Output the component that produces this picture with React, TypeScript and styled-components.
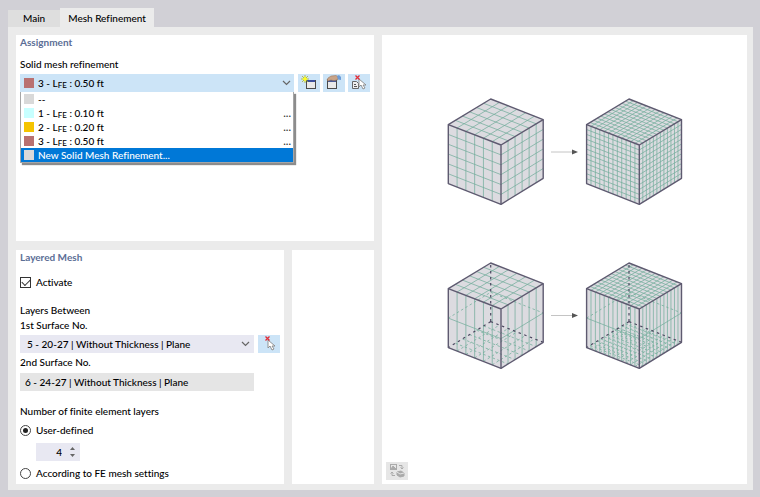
import React, { useState } from "react";
import styled, { createGlobalStyle } from "styled-components";

const GlobalStyle = createGlobalStyle`
  * { box-sizing: border-box; }
  body { margin: 0; background: #d1d0d6; }
  body, button, input, select {
    font-family: Lato, "Open Sans", sans-serif;
    font-size: 10px;
    font-weight: 500;
    line-height: 15px;
    font-variant-ligatures: none;
    color: #000;
  }
`;

const Page = styled.div`
  display: flex;
  flex-direction: column;
  min-height: 100vh;
  padding: 8px 7px 7px 8px;
`;

const Tabs = styled.div`
  display: flex;
  align-items: flex-end;
`;

const Tab = styled.button<{ $active?: boolean }>`
  height: ${(p) => (p.$active ? 19 : 17)}px;
  padding: ${(p) => (p.$active ? "2px 8px 0" : "0 15px")};
  border: 0;
  background: ${(p) => (p.$active ? "#ebebeb" : "#dedede")};
`;

const Body = styled.main`
  flex: 1;
  display: grid;
  grid-template-columns: 268fr 82fr 365fr;
  grid-template-rows: 206px 1fr;
  gap: 9px 8px;
  padding: 8px 6px 6px 8px;
  background: #ebebeb;
`;

const Panel = styled.section`
  min-width: 0;
  padding: 0 4px 2px;
  background: #fff;
`;

const AssignmentPanel = styled(Panel)`
  grid-column: 1 / 3;
`;

const PreviewPanel = styled(Panel)`
  grid-column: 3;
  grid-row: 1 / 3;
  display: flex;
  flex-direction: column;
  justify-content: space-between;
  align-items: flex-start;
  padding: 55px 4px 4px;
`;

const Title = styled.h2`
  margin: 0;
  font-size: 10px;
  line-height: 15px;
  font-weight: 700;
  color: #5b6e96;
`;

const Label = styled.label<{ $gap?: number }>`
  display: block;
  margin-top: ${(p) => p.$gap ?? 0}px;
`;

const GroupLabel = styled.div<{ $gap?: number }>`
  margin-top: ${(p) => p.$gap ?? 0}px;
`;

const ControlRow = styled.div`
  display: grid;
  grid-template-columns: 1fr auto;
  gap: 4px;
  margin-top: 2px;
`;

const ButtonGroup = styled.div`
  display: flex;
  gap: 3px;
`;

const IconButton = styled.button<{ $muted?: boolean }>`
  display: flex;
  align-items: center;
  justify-content: center;
  width: 22px;
  height: 18px;
  padding: 0;
  border: 0;
  background: ${(p) => (p.$muted ? "#e6e6e6" : "#cce4f7")};
`;

const Combo = styled.div`
  position: relative;
`;

const ComboButton = styled.button`
  display: flex;
  align-items: center;
  width: 100%;
  height: 18px;
  padding: 0 3px 0 4px;
  border: 0;
  background: #cce4f7;
`;

const ComboText = styled.span`
  flex: 1;
  text-align: left;
`;

const List = styled.ul`
  position: absolute;
  top: 100%;
  left: 0;
  right: 0;
  margin: 0;
  padding: 0;
  list-style: none;
  background: #fff;
  border: 1px solid #a6a6a6;
  border-top: 0;
  box-shadow: 2px 2px 1px #8c8c8c;
`;

const Option = styled.li<{ $selected?: boolean }>`
  display: flex;
  align-items: center;
  height: 14px;
  padding: 0 2px 0 3px;
  background: ${(p) => (p.$selected ? "#0078d7" : "#fff")};
  color: ${(p) => (p.$selected ? "#fff" : "#000")};
`;

const Swatch = styled.span<{ $color: string }>`
  width: 10px;
  height: 10px;
  margin-right: 4px;
  background: ${(p) => p.$color};
`;

const Small = styled.span`
  font-size: 8px;
  line-height: 8px;
  vertical-align: -1px;
`;

const More = styled.span`
  margin-left: auto;
  font-size: 11px;
  line-height: 14px;
  color: #333;
`;

const SelectWrap = styled.div`
  display: grid;
  align-items: center;
  background: #e8e8f2;
  > * { grid-area: 1 / 1; }
  > svg { justify-self: end; margin-right: 4px; pointer-events: none; }
`;

const Select = styled.select`
  appearance: none;
  width: 100%;
  height: 18px;
  padding: 0 16px 0 7px;
  border: 0;
  border-radius: 0;
  background: transparent;
`;

const ReadOnly = styled.input`
  display: block;
  width: calc(100% - 26px);
  height: 18px;
  margin-top: 3px;
  padding: 0 5px;
  border: 0;
  background: #e5e5e5;
`;

const Choice = styled.label<{ $gap: number }>`
  display: flex;
  align-items: center;
  gap: 5px;
  height: 18px;
  margin-top: ${(p) => p.$gap}px;
`;

const Check = styled.input`
  appearance: none;
  width: 11px;
  height: 11px;
  margin: 0;
  border: 1px solid #333;
  background: #fff;
  display: grid;
  place-items: center;
  &:checked::before {
    content: "";
    width: 7px;
    height: 4px;
    margin-top: -2px;
    border: solid #333;
    border-width: 0 0 1px 1px;
    transform: rotate(-45deg);
  }
`;

const Radio = styled.input`
  appearance: none;
  width: 11px;
  height: 11px;
  margin: 0;
  border: 1px solid #444;
  border-radius: 50%;
  background: #fff;
  display: grid;
  place-items: center;
  &:checked::before {
    content: "";
    width: 5px;
    height: 5px;
    border-radius: 50%;
    background: #222;
  }
`;

const Spinner = styled.div`
  display: flex;
  align-items: center;
  width: 44px;
  height: 18px;
  margin: 4px 0 0 16px;
  padding-right: 5px;
  background: #e8e8f2;
`;

const SpinInput = styled.input`
  flex: 1;
  min-width: 0;
  height: 18px;
  padding: 0 8px 0 0;
  border: 0;
  background: transparent;
  text-align: right;
`;

const SpinButtons = styled.div`
  display: flex;
  flex-direction: column;
`;

const SpinButton = styled.button`
  display: flex;
  align-items: center;
  justify-content: center;
  width: 5px;
  height: 7px;
  padding: 0;
  border: 0;
  background: none;
`;

const Illustration = styled.svg`
  display: block;
  align-self: center;
  width: 261px;
  max-width: 100%;
`;

const Chevron = () => (
  <svg width="9" height="6" viewBox="0 0 9 6" fill="none" stroke="#666" strokeWidth="1.2" aria-hidden="true">
    <path d="M1 1l3.5 3.5L8 1" />
  </svg>
);

const NewIcon = () => (
  <svg width="16" height="16" viewBox="0 0 16 16" aria-hidden="true">
    <rect x="5.5" y="5.5" width="9" height="8" fill="#e9e9e9" stroke="#4a4a4a" />
    <path d="M6 5h8v2H6z" fill="#3c4f9c" />
    <path d="M4 0v8M0 4h8M1 1l6 6M7 1L1 7" stroke="#a9b02a" strokeWidth="0.8" />
    <path d="M4 1l1 2 2 1-2 1-1 2-1-2-2-1 2-1z" fill="#ffff20" />
  </svg>
);

const EditIcon = () => (
  <svg width="16" height="16" viewBox="0 0 16 16" aria-hidden="true">
    <rect x="1.5" y="4.5" width="9" height="9" fill="#e9e9e9" stroke="#4a4a4a" />
    <path d="M2 5h8v2H2z" fill="#4a5a96" />
    <path d="M2 3l3-2 5-.5 2 1v3l-3 1H7L5 5 2 6 1 5z" fill="#c9a488" stroke="#8b6b55" strokeWidth="0.5" />
    <path d="M11 1l2-1 2 2v3l-3-.5z" fill="#6d9dd8" />
  </svg>
);

const CursorShape = ({ x, y }: { x: number; y: number }) => (
  <g transform={`translate(${x} ${y})`}>
    <path d="M0 0v8l2-2 2 4 2-1-2-3h3z" fill="#fff" stroke="#888" strokeWidth="0.9" />
  </g>
);

const PickIcon = ({ withPage }: { withPage?: boolean }) => (
  <svg width="16" height="16" viewBox="0 0 16 16" aria-hidden="true">
    {withPage && (
      <>
        <path d="M1.5 6.5h4l2 2v5h-6z" fill="#eee" stroke="#666" />
        <path d="M3 9.5h2M3 11.5h3" stroke="#555" />
      </>
    )}
    <CursorShape x={withPage ? 8 : 7} y={4} />
    <path d="M4.5 0.5l4 4M8.5 0.5l-4 4" stroke="#e02c36" strokeWidth="1.3" />
  </svg>
);

const SwapIcon = () => (
  <svg width="16" height="16" viewBox="0 0 16 16" fill="none" stroke="#aaa" aria-hidden="true">
    <rect x="1.5" y="1.5" width="6" height="5" />
    <path d="M2 6l2-3 3 3z" fill="#aaa" />
    <path d="M10 2.5h3v3M11.5 4.5L13 6l1.5-1.5M6 12.500H3v-3M1.5 10.5L3 9l1.5 1.5" />
    <path d="M8 9l4-1 3 2v3l-4 1-3-2z" fill="#aaa" />
    <path d="M8 9l3 2 4-1" stroke="#e6e6e6" />
  </svg>
);

const SpinArrow = ({ down }: { down?: boolean }) => (
  <svg width="5" height="3" viewBox="0 0 5 3" fill="#666" aria-hidden="true">
    <path d={down ? "M0 0h5L2.5 3z" : "M0 3h5L2.5 0z"} />
  </svg>
);

type Point = [number, number];

const corners: Record<string, Point> = {
  backTop: [50.7, 8.7],
  leftTop: [8.3, 34.3],
  rightTop: [103.2, 29.3],
  frontTop: [61, 54.7],
  backBottom: [50.7, 67.3],
  leftBottom: [8.3, 93.3],
  rightBottom: [103.2, 88],
  frontBottom: [61, 114],
};

const mix = (a: Point, b: Point, t: number): Point => [
  a[0] + (b[0] - a[0]) * t,
  a[1] + (b[1] - a[1]) * t,
];

const seg = (a: Point, b: Point) =>
  `M${a[0].toFixed(2)} ${a[1].toFixed(2)}L${b[0].toFixed(2)} ${b[1].toFixed(2)}`;

/* Lines running from edge a-b to edge c-d, dividing the face in n strips. */
const strips = (a: Point, b: Point, c: Point, d: Point, n: number) =>
  Array.from({ length: n - 1 }, (_, i) =>
    seg(mix(a, b, (i + 1) / n), mix(c, d, (i + 1) / n))
  ).join("");

const Cube = ({ x, y, n, layered }: { x: number; y: number; n: number; layered?: boolean }) => {
  const c = corners;
  const rows = layered ? 2 : n;
  const top =
    strips(c.leftTop, c.backTop, c.frontTop, c.rightTop, n) +
    strips(c.leftTop, c.frontTop, c.backTop, c.rightTop, n);
  const columns =
    strips(c.leftTop, c.frontTop, c.leftBottom, c.frontBottom, n) +
    strips(c.frontTop, c.rightTop, c.frontBottom, c.rightBottom, n);
  const levels =
    strips(c.leftTop, c.leftBottom, c.frontTop, c.frontBottom, rows) +
    strips(c.frontTop, c.frontBottom, c.rightTop, c.rightBottom, rows);
  const floor =
    strips(c.leftBottom, c.backBottom, c.frontBottom, c.rightBottom, n) +
    strips(c.leftBottom, c.frontBottom, c.backBottom, c.rightBottom, n);
  const hiddenLevel =
    strips(c.leftTop, c.leftBottom, c.backTop, c.backBottom, 2) +
    strips(c.backTop, c.backBottom, c.rightTop, c.rightBottom, 2);
  const outline = [c.backTop, c.rightTop, c.rightBottom, c.frontBottom, c.leftBottom, c.leftTop];
  return (
    <g transform={`translate(${x} ${y})`} fill="none" strokeLinejoin="round">
      <polygon points={outline.join(" ")} fill="#dcdbe0" />
      <path d={top + columns + levels} stroke="#74ae9c" strokeWidth="0.75" />
      {layered && (
        <>
          <path d={floor + hiddenLevel} stroke="#74ae9c" strokeWidth="0.8" strokeDasharray="2.5 2.5" />
          <path
            d={
              seg(c.backBottom, c.backTop) +
              seg(c.backBottom, c.leftBottom) +
              seg(c.backBottom, c.rightBottom)
            }
            stroke="#4c4860"
            strokeWidth="1.2"
            strokeDasharray="2.5 3.5"
          />
        </>
      )}
      <polygon points={outline.join(" ")} stroke="#5e5a70" strokeWidth="1.4" />
      <path
        d={
          seg(c.leftTop, c.frontTop) +
          seg(c.frontTop, c.rightTop) +
          seg(c.frontTop, c.frontBottom)
        }
        stroke="#5e5a70"
        strokeWidth="1.4"
      />
    </g>
  );
};

const Arrow = ({ y }: { y: number }) => (
  <g transform={`translate(117 ${y})`}>
    <path d="M0 0h22" stroke="#c4c4c4" strokeWidth="1" />
    <path d="M21 -2.5L27 0l-6 2.5z" fill="#555" />
  </g>
);

const Length = ({ no, value }: { no: number; value: string }) => (
  <span>
    {no} - L<Small>FE</Small> : {value} ft
  </span>
);

const refinements = [
  { no: 1, value: "0.10", color: "#c8ffff" },
  { no: 2, value: "0.20", color: "#f5c400" },
  { no: 3, value: "0.50", color: "#b97171" },
];

export default function App() {
  const [active, setActive] = useState(true);
  const [mode, setMode] = useState("user");
  const [layers, setLayers] = useState(4);
  return (
    <>
      <GlobalStyle />
      <Page>
        <Tabs role="tablist">
          <Tab role="tab" aria-selected={false}>Main</Tab>
          <Tab role="tab" aria-selected $active>Mesh Refinement</Tab>
        </Tabs>
        <Body>
          <AssignmentPanel>
            <Title>Assignment</Title>
            <Label htmlFor="refinement" $gap={7}>Solid mesh refinement</Label>
            <ControlRow>
              <Combo>
                <ComboButton
                  id="refinement"
                  role="combobox"
                  aria-haspopup="listbox"
                  aria-expanded
                  aria-controls="refinement-list"
                >
                  <Swatch $color="#b97171" />
                  <ComboText><Length no={3} value="0.50" /></ComboText>
                  <Chevron />
                </ComboButton>
                <List id="refinement-list" role="listbox">
                  <Option role="option" aria-selected={false}>
                    <Swatch $color="#d9d9d9" />--
                  </Option>
                  {refinements.map((r) => (
                    <Option key={r.no} role="option" aria-selected={false}>
                      <Swatch $color={r.color} />
                      <Length no={r.no} value={r.value} />
                      <More>...</More>
                    </Option>
                  ))}
                  <Option role="option" aria-selected $selected>
                    <Swatch $color="#d9d9d9" />New Solid Mesh Refinement...
                  </Option>
                </List>
              </Combo>
              <ButtonGroup>
                <IconButton aria-label="New"><NewIcon /></IconButton>
                <IconButton aria-label="Edit"><EditIcon /></IconButton>
                <IconButton aria-label="Select objects"><PickIcon withPage /></IconButton>
              </ButtonGroup>
            </ControlRow>
          </AssignmentPanel>

          <Panel>
            <Title>Layered Mesh</Title>
            <Choice $gap={8}>
              <Check type="checkbox" checked={active} onChange={(e) => setActive(e.target.checked)} />
              Activate
            </Choice>
            <GroupLabel $gap={12}>Layers Between</GroupLabel>
            <Label htmlFor="surface-1">1st Surface No.</Label>
            <ControlRow>
              <SelectWrap>
                <Select id="surface-1">
                  <option>5 - 20-27 | Without Thickness | Plane</option>
                </Select>
                <Chevron />
              </SelectWrap>
              <IconButton aria-label="Select surface"><PickIcon /></IconButton>
            </ControlRow>
            <Label htmlFor="surface-2" $gap={2}>2nd Surface No.</Label>
            <ReadOnly id="surface-2" readOnly value="6 - 24-27 | Without Thickness | Plane" />
            <GroupLabel $gap={13}>Number of finite element layers</GroupLabel>
            <Choice $gap={2}>
              <Radio type="radio" name="layers" checked={mode === "user"} onChange={() => setMode("user")} />
              User-defined
            </Choice>
            <Spinner>
              <SpinInput
                aria-label="Number of layers"
                value={layers}
                onChange={(e) => setLayers(Number(e.target.value) || 0)}
              />
              <SpinButtons>
                <SpinButton aria-label="Increase" onClick={() => setLayers(layers + 1)}><SpinArrow /></SpinButton>
                <SpinButton aria-label="Decrease" onClick={() => setLayers(layers - 1)}><SpinArrow down /></SpinButton>
              </SpinButtons>
            </Spinner>
            <Choice $gap={3}>
              <Radio type="radio" name="layers" checked={mode === "mesh"} onChange={() => setMode("mesh")} />
              According to FE mesh settings
            </Choice>
          </Panel>

          <Panel />

          <PreviewPanel>
            <Illustration viewBox="0 0 261 285" role="img" aria-label="Mesh refinement of a solid">
              <Cube x={6} y={0.3} n={6} />
              <Arrow y={62} />
              <Cube x={144.3} y={0.3} n={12} />
              <Cube x={6} y={164.3} n={6} layered />
              <Arrow y={225.5} />
              <Cube x={144.3} y={164.3} n={12} layered />
            </Illustration>
            <IconButton aria-label="Switch picture" $muted><SwapIcon /></IconButton>
          </PreviewPanel>
        </Body>
      </Page>
    </>
  );
}
